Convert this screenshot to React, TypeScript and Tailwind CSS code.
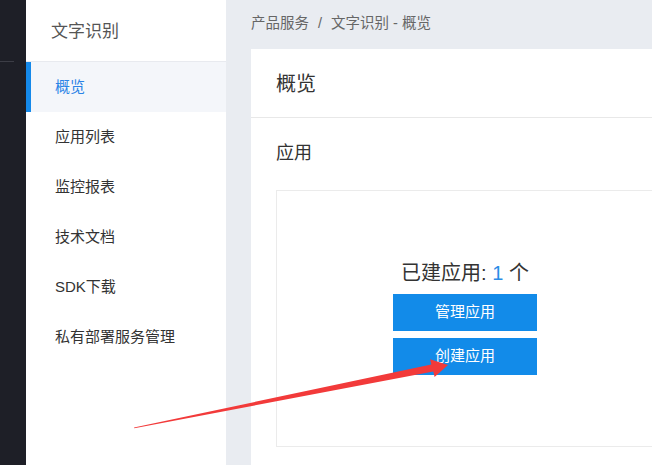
export default function App() {
  const items = ["应用列表", "监控报表", "技术文档", "SDK下载", "私有部署服务管理"];
  return (
    <div
      className="relative flex h-[465px] w-[652px] overflow-hidden bg-[#e9ecf1]"
      style={{ fontFamily: '"Liberation Sans", "Noto Sans CJK SC", sans-serif' }}
    >
      {/* dark rail */}
      <div className="flex w-[26px] shrink-0 flex-col bg-[#1e1f27]">
        <div className="h-[61px]" />
        <div className="h-px w-[14px] bg-[#3c3d46]" />
      </div>

      {/* secondary sidebar */}
      <div className="flex w-[200px] shrink-0 flex-col bg-white">
        <div className="flex h-[62px] items-center border-b border-[#e8eaef] pl-[25px] pt-[3px] text-[17px] leading-[24px] text-[#555]">
          文字识别
        </div>
        <div className="flex h-[50px] items-center border-l-[5px] border-[#1589ea] bg-[#f4f6fa] pl-[24px] text-[15px] leading-[20px] text-[#2a83e6]">
          概览
        </div>
        {items.map((t) => (
          <div key={t} className="flex h-[50px] items-center pl-[29px] text-[15px] leading-[20px] text-[#333]">
            {t}
          </div>
        ))}
      </div>

      {/* main */}
      <div className="flex flex-col pl-[25px]">
        <div className="flex h-[49px] items-center pb-[4px] text-[14.5px] leading-[20px] text-[#666]">
          <span>产品服务</span>
          <span className="mx-[9px]">/</span>
          <span>文字识别 - 概览</span>
        </div>
        <div className="flex w-[430px] flex-1 flex-col bg-white">
          <div className="flex h-[69px] items-center border-b border-[#e8e8e8] pl-[25px] pt-[1px] text-[20px] leading-[28px] text-[#333]">
            概览
          </div>
          <div className="flex h-[72px] items-center pl-[25px] pb-[2px] text-[18px] leading-[26px] text-[#333]">
            应用
          </div>
          <div className="ml-[25px] flex h-[257px] w-[378px] flex-col items-center justify-center border border-[#ebebeb] pb-[2px]">
            <div className="mb-[9px] text-[20px] leading-[24px] text-[#333]">
              已建应用: <span className="text-[#2a8ce6]">1</span> 个
            </div>
            <div className="flex h-[37px] w-[144px] items-center justify-center bg-[#128be9] text-[15px] text-white">
              管理应用
            </div>
            <div className="mt-[7px] flex h-[37px] w-[144px] items-center justify-center bg-[#128be9] text-[15px] text-white">
              创建应用
            </div>
          </div>
        </div>
      </div>

      {/* red annotation arrow */}
      <svg className="pointer-events-none absolute left-0 top-0" width="652" height="465" viewBox="0 0 652 465">
        <polygon
          points="134,427.5 431.3,364.6 430,359.2 448,365 434.6,377 433.3,371.4 134.3,428.3"
          fill="#f23a3a"
        />
      </svg>
    </div>
  );
}
